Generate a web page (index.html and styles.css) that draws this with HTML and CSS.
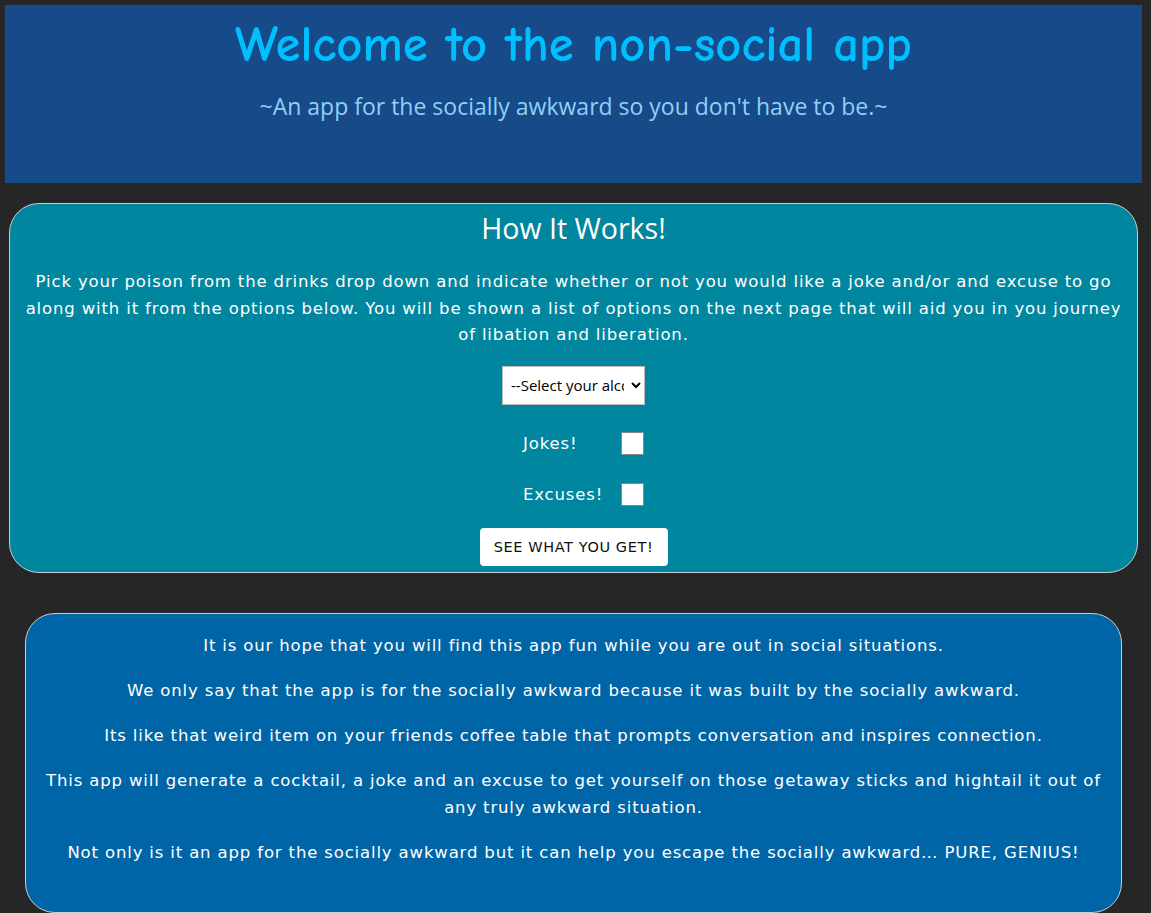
FILE: index.html
```html
<!DOCTYPE html>
<html lang="en">
<head>
<meta charset="utf-8">
<title>Non-social app</title>
<link rel="stylesheet" href="styles.css">
</head>
<body>
<header class="hero">
  <h1 class="hero-title">Welcome to the non-social app</h1>
  <p class="hero-sub">~An app for the socially awkward so you don't have to be.~</p>
</header>

<section class="how">
  <h2 class="how-title">How It Works!</h2>
  <p class="how-text">Pick your poison from the drinks drop down and indicate whether or not you would like a joke and/or and excuse to go along with it from the options below. You will be shown a list of options on the next page that will aid you in you journey of libation and liberation.</p>
  <form class="how-form">
    <select class="drink-select">
      <option>--Select your alcohol--</option>
    </select>
    <label class="opt"><span class="opt-label">Jokes!</span><span class="box"></span></label>
    <label class="opt"><span class="opt-label">Excuses!</span><span class="box"></span></label>
    <button type="button" class="go-btn">SEE WHAT YOU GET!</button>
  </form>
</section>

<section class="about">
  <p>It is our hope that you will find this app fun while you are out in social situations.</p>
  <p>We only say that the app is for the socially awkward because it was built by the socially awkward.</p>
  <p>Its like that weird item on your friends coffee table that prompts conversation and inspires connection.</p>
  <p>This app will generate a cocktail, a joke and an excuse to get yourself on those getaway sticks and hightail it out of any truly awkward situation.</p>
  <p>Not only is it an app for the socially awkward but it can help you escape the socially awkward… PURE, GENIUS!</p>
</section>
</body>
</html>
```

FILE: styles.css
```css
* { box-sizing: border-box; }

body {
  margin: 5px 9px 0 5px;
  background: #262626;
  font-family: "DejaVu Sans", Verdana, sans-serif;
  color: #fff;
}

.hero {
  background: #174a89;
  height: 178px;
  padding-top: 10px;
  text-align: center;
}

.hero-title {
  margin: 0;
  font-family: "Comic Neue", "Comic Sans MS", "DejaVu Sans", sans-serif;
  font-weight: 700;
  font-size: 50.7px;
  line-height: 60px;
  color: #00bfff;
}

.hero-sub {
  margin: 16px 0 0;
  font-family: "Open Sans", "Noto Sans", sans-serif;
  font-size: 23px;
  line-height: 30px;
  color: #8fd0f8;
}

.how {
  margin: 20px 4px 0 4px;
  background: #00869f;
  border: 1px solid #c8d0d4;
  border-radius: 30px;
  height: 370px;
  padding: 9px 14px 0;
  text-align: center;
}

.how-title {
  margin: 0;
  font-family: "Open Sans", "Noto Sans", sans-serif;
  font-weight: normal;
  font-size: 28.5px;
  line-height: 30px;
}

.how-text {
  margin: 26px 0 0;
  font-size: 16.5px;
  line-height: 26.5px;
  letter-spacing: 0.85px;
}

.how-form {
  display: flex;
  flex-direction: column;
  align-items: center;
  margin-top: 17px;
}

.drink-select {
  width: 143px;
  height: 39px;
  font-family: "Open Sans", "Noto Sans", sans-serif;
  font-size: 15px;
  background: #fff;
  color: #000;
  border: 1px solid #bbb;
  border-radius: 0;
  padding: 0 4px;
}

.opt {
  display: flex;
  align-items: center;
  width: 121px;
  justify-content: space-between;
  margin-left: 20px;
  font-size: 16.5px;
  letter-spacing: 0.85px;
}

.opt:first-of-type { margin-top: 27px; }
.opt + .opt { margin-top: 28px; }

.box {
  width: 23px;
  height: 23px;
  background: #fff;
  border: 1px solid #888;
}

.go-btn {
  margin-top: 22px;
  width: 188px;
  height: 38px;
  background: #fff;
  color: #111;
  border: none;
  border-radius: 4px;
  font-family: "DejaVu Sans", Verdana, sans-serif;
  font-size: 14.5px;
  letter-spacing: 0.6px;
}

.about {
  margin: 40px 20px 0 20px;
  background: #0065a6;
  border: 1px solid #c8d0d4;
  border-radius: 30px;
  height: 300px;
  padding: 18px 18px 0;
  text-align: center;
}

.about p {
  margin: 0 0 18px;
  font-size: 16.5px;
  line-height: 27px;
  letter-spacing: 0.85px;
}
```
